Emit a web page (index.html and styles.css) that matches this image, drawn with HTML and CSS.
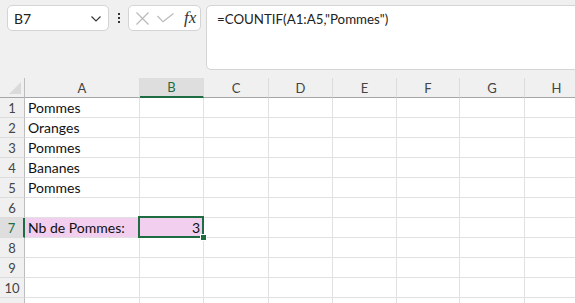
FILE: index.html
```html
<!DOCTYPE html>
<html lang="fr">

<head>
    <meta charset="UTF-8" />
    <title>Classeur - NB.SI</title>
    <link rel="stylesheet" href="styles.css">
</head>

<body>

    <div class="toolbar">
        <div class="name-box">
            <span>B7</span>
            <svg class="chevron" width="10" height="6" viewBox="0 0 10 6">
                <path d="M0.5 0.5 L5 5 L9.5 0.5" fill="none" stroke="#333" stroke-width="1.1" />
            </svg>
        </div>

        <div class="dots">
            <i></i><i></i><i></i>
        </div>

        <div class="fx-box">
            <svg width="13" height="13" viewBox="0 0 13 13">
                <path d="M0.5 0.5 L12.5 12.5 M12.5 0.5 L0.5 12.5" stroke="#b9b9b9" stroke-width="1.2" />
            </svg>
            <svg width="17" height="10" viewBox="0 0 17 10">
                <path d="M0.5 3 L6 8.8 L16.5 0.5" fill="none" stroke="#b9b9b9" stroke-width="1.2" />
            </svg>
            <span class="fx">fx</span>
        </div>

        <div class="formula-bar">=COUNTIF(A1:A5,"Pommes")</div>
    </div>

    <div class="sheet">
        <div class="corner"><span class="triangle"></span></div>
        <div class="col-head">A</div>
        <div class="col-head active">B</div>
        <div class="col-head">C</div>
        <div class="col-head">D</div>
        <div class="col-head">E</div>
        <div class="col-head">F</div>
        <div class="col-head">G</div>
        <div class="col-head">H</div>

        <div class="row-head">1</div>
        <div class="cell">Pommes</div><div class="cell"></div><div class="cell"></div><div class="cell"></div><div class="cell"></div><div class="cell"></div><div class="cell"></div><div class="cell"></div>

        <div class="row-head">2</div>
        <div class="cell">Oranges</div><div class="cell"></div><div class="cell"></div><div class="cell"></div><div class="cell"></div><div class="cell"></div><div class="cell"></div><div class="cell"></div>

        <div class="row-head">3</div>
        <div class="cell">Pommes</div><div class="cell"></div><div class="cell"></div><div class="cell"></div><div class="cell"></div><div class="cell"></div><div class="cell"></div><div class="cell"></div>

        <div class="row-head">4</div>
        <div class="cell">Bananes</div><div class="cell"></div><div class="cell"></div><div class="cell"></div><div class="cell"></div><div class="cell"></div><div class="cell"></div><div class="cell"></div>

        <div class="row-head">5</div>
        <div class="cell">Pommes</div><div class="cell"></div><div class="cell"></div><div class="cell"></div><div class="cell"></div><div class="cell"></div><div class="cell"></div><div class="cell"></div>

        <div class="row-head">6</div>
        <div class="cell"></div><div class="cell"></div><div class="cell"></div><div class="cell"></div><div class="cell"></div><div class="cell"></div><div class="cell"></div><div class="cell"></div>

        <div class="row-head active">7</div>
        <div class="cell pink">Nb de Pommes:</div><div class="cell pink num selected">3</div><div class="cell"></div><div class="cell"></div><div class="cell"></div><div class="cell"></div><div class="cell"></div><div class="cell"></div>

        <div class="row-head">8</div>
        <div class="cell"></div><div class="cell"></div><div class="cell"></div><div class="cell"></div><div class="cell"></div><div class="cell"></div><div class="cell"></div><div class="cell"></div>

        <div class="row-head">9</div>
        <div class="cell"></div><div class="cell"></div><div class="cell"></div><div class="cell"></div><div class="cell"></div><div class="cell"></div><div class="cell"></div><div class="cell"></div>

        <div class="row-head">10</div>
        <div class="cell"></div><div class="cell"></div><div class="cell"></div><div class="cell"></div><div class="cell"></div><div class="cell"></div><div class="cell"></div><div class="cell"></div>

        <div class="row-head"></div>
        <div class="cell"></div><div class="cell"></div><div class="cell"></div><div class="cell"></div><div class="cell"></div><div class="cell"></div><div class="cell"></div><div class="cell"></div>
    </div>

</body>

</html>
```

FILE: styles.css
```css
body {
    margin: 0;
    background: #f0f0f0;
    font-family: Lato, "Open Sans", sans-serif;
    color: #222;
    overflow: hidden;
    width: 575px;
    height: 303px;
}

/* barre de formule */

.toolbar {
    display: flex;
    align-items: flex-start;
    height: 78px;
    padding: 5px 0 0 7px;
    box-sizing: border-box;
}

.name-box {
    display: flex;
    align-items: center;
    justify-content: space-between;
    width: 102px;
    height: 26px;
    box-sizing: border-box;
    padding: 0 7px 0 6px;
    background: #fff;
    border: 1px solid #d4d4d4;
    border-radius: 5px;
    font-size: 14px;
}

.chevron {
    margin-top: 2px;
}

.dots {
    display: flex;
    flex-direction: column;
    gap: 2px;
    margin: 8px 8px 0 9px;
}

.dots i {
    display: block;
    width: 2px;
    height: 2px;
    background: #333;
}

.fx-box {
    display: flex;
    align-items: center;
    gap: 8px;
    width: 73px;
    height: 26px;
    box-sizing: border-box;
    padding: 0 0 0 7px;
    background: #fff;
    border: 1px solid #d4d4d4;
    border-radius: 5px;
}

.fx-box .fx {
    font-family: "Liberation Serif", serif;
    font-style: italic;
    font-size: 17px;
    color: #333;
    margin-left: 2px;
}

.formula-bar {
    flex: 1;
    height: 65px;
    margin-left: 5px;
    margin-right: -10px;
    box-sizing: border-box;
    padding: 5px 10px;
    background: #fff;
    border: 1px solid #d4d4d4;
    border-radius: 5px;
    font-size: 13.3px;
    color: #222;
}

/* feuille */

.sheet {
    display: grid;
    grid-template-columns: 25px 115px 64px 65px 64px 64px 63px 65px 64px;
    grid-template-rows: 20px;
    grid-auto-rows: 20px;
    background: #fff;
}

.corner {
    position: relative;
    background: #f0f0f0;
    border-right: 1px solid #bdbdbd;
    border-bottom: 1px solid #a6a6a6;
}

.triangle {
    position: absolute;
    right: 3px;
    bottom: 3px;
    width: 0;
    height: 0;
    border-left: 12px solid transparent;
    border-bottom: 12px solid #dadada;
}

.col-head {
    display: flex;
    align-items: center;
    justify-content: center;
    background: #f0f0f0;
    border-right: 1px solid #dcdcdc;
    border-bottom: 1px solid #a6a6a6;
    font-size: 13px;
    color: #444;
}

.col-head.active {
    background: #dedede;
    color: #1e6c41;
    border-bottom: 2px solid #1e6c41;
}

.row-head {
    display: flex;
    align-items: center;
    justify-content: center;
    background: #f0f0f0;
    border-right: 1px solid #bdbdbd;
    border-bottom: 1px solid #dcdcdc;
    font-size: 13px;
    color: #444;
}

.row-head.active {
    background: #dedede;
    color: #1e6c41;
    border-right: 2px solid #1e6c41;
}

.cell {
    box-sizing: border-box;
    border-right: 1px solid #e1e1e1;
    border-bottom: 1px solid #e1e1e1;
    padding: 2px 3px 0;
    font-size: 14px;
    line-height: 16px;
    color: #111;
    white-space: nowrap;
}

.pink {
    background: #f2ceef;
}

.num {
    text-align: right;
}

.selected {
    position: relative;
}

.selected::before {
    content: "";
    position: absolute;
    left: -2px;
    top: -2px;
    right: -1px;
    bottom: -1px;
    border: 2px solid #1e6c41;
}

.selected::after {
    content: "";
    position: absolute;
    right: -4px;
    bottom: -4px;
    width: 5px;
    height: 5px;
    background: #1e6c41;
    border: 1px solid #fff;
}
```
